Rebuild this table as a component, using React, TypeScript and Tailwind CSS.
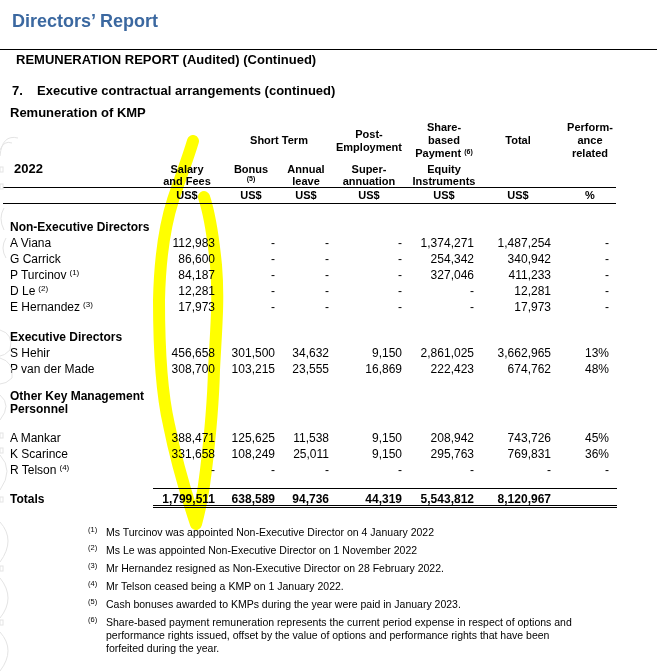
import React from "react";

type Row = { name: string; sup?: string; vals: string[] };

const ned: Row[] = [
  { name: "A Viana", vals: ["112,983", "-", "-", "-", "1,374,271", "1,487,254", "-"] },
  { name: "G Carrick", vals: ["86,600", "-", "-", "-", "254,342", "340,942", "-"] },
  { name: "P Turcinov", sup: "(1)", vals: ["84,187", "-", "-", "-", "327,046", "411,233", "-"] },
  { name: "D Le", sup: "(2)", vals: ["12,281", "-", "-", "-", "-", "12,281", "-"] },
  { name: "E Hernandez", sup: "(3)", vals: ["17,973", "-", "-", "-", "-", "17,973", "-"] },
];

const exec: Row[] = [
  { name: "S Hehir", vals: ["456,658", "301,500", "34,632", "9,150", "2,861,025", "3,662,965", "13%"] },
  { name: "P van der Made", vals: ["308,700", "103,215", "23,555", "16,869", "222,423", "674,762", "48%"] },
];

const kmp: Row[] = [
  { name: "A Mankar", vals: ["388,471", "125,625", "11,538", "9,150", "208,942", "743,726", "45%"] },
  { name: "K Scarince", vals: ["331,658", "108,249", "25,011", "9,150", "295,763", "769,831", "36%"] },
  { name: "R Telson", sup: "(4)", vals: ["-", "-", "-", "-", "-", "-", "-"] },
];

const totals = ["1,799,511", "638,589", "94,736", "44,319", "5,543,812", "8,120,967", ""];

const notes: { n: string; t: React.ReactNode }[] = [
  { n: "(1)", t: "Ms Turcinov was appointed Non-Executive Director on 4 January 2022" },
  { n: "(2)", t: "Ms Le was appointed Non-Executive Director on 1 November 2022" },
  { n: "(3)", t: "Mr Hernandez resigned as Non-Executive Director on 28 February 2022." },
  { n: "(4)", t: "Mr Telson ceased being a KMP on 1 January 2022." },
  { n: "(5)", t: "Cash bonuses awarded to KMPs during the year were paid in January 2023." },
  {
    n: "(6)",
    t: (
      <>
        Share-based payment remuneration represents the current period expense in respect of options and
        <br />
        performance rights issued, offset by the value of options and performance rights that have been
        <br />
        forfeited during the year.
      </>
    ),
  },
];

function DataRow({ r }: { r: Row }) {
  return (
    <div className="grid h-[16px] grid-cols-[153px_62px_60px_54px_73px_72px_77px_58px] leading-[16px] text-[12px]">
      <div className="pl-[10px] whitespace-nowrap">
        {r.name}
        {r.sup && <span className="relative -top-[4px] ml-[3px] text-[8px] leading-none">{r.sup}</span>}
      </div>
      {r.vals.map((v, i) => (
        <div key={i} className="text-right whitespace-nowrap">
          {v}
        </div>
      ))}
    </div>
  );
}

function Decor() {
  return (
    <svg
      className="pointer-events-none absolute left-0 top-0"
      width="30"
      height="671"
      viewBox="0 0 30 671"
      fill="none"
      stroke="#e4e4e4"
      strokeWidth="1"
    >
      <path d="M0 156 Q2 134 18 138" />
      <path d="M0 150 Q4 140 12 143" />
      <rect x="0" y="167" width="3" height="5" />
      <rect x="0" y="184" width="3" height="5" />
      <path d="M4 208 Q-2 218 4 230" />
      <path d="M6 238 Q0 248 6 258" />
      <path d="M0 330 Q14 334 10 350 Q4 356 0 356" />
      <path d="M0 358 Q14 362 12 378 Q6 384 0 384" />
      <path d="M0 395 Q12 405 0 420" />
      <rect x="0" y="433" width="3" height="5" />
      <rect x="0" y="448" width="3" height="5" />
      <path d="M0 455 Q14 470 0 490" />
      <rect x="0" y="497" width="3" height="5" />
      <path d="M0 522 Q16 540 0 562" />
      <rect x="0" y="566" width="3" height="5" />
      <path d="M0 578 Q16 598 0 618" />
      <rect x="0" y="620" width="3" height="5" />
      <path d="M0 632 Q16 650 0 671" />
    </svg>
  );
}

function Highlight() {
  return (
    <svg
      className="pointer-events-none absolute left-0 top-0 mix-blend-multiply"
      width="657"
      height="671"
      viewBox="0 0 657 671"
      fill="none"
    >
      <path
        d="M193 141 C188 158 181 176 173 200 C165 225 160 255 159 300 C159 345 162 395 169 425 C175 455 184 488 196 524 C201 505 204 490 206 470 C209 445 213 410 214 370 C216 330 219 300 216 265 C213 235 209 212 204 197"
        stroke="#ffff00"
        strokeWidth="12"
        strokeLinecap="round"
        strokeLinejoin="round"
      />
    </svg>
  );
}

export default function App() {
  return (
    <div className="relative w-[657px] h-[671px] overflow-hidden bg-white text-black font-['Liberation_Sans',Arial,sans-serif]">
      <div className="pt-[11px] pl-[12px] text-[18px] leading-[20px] font-bold text-[#3b68a0]">
        Directors’ Report
      </div>
      <div className="mt-[18px] h-px w-full bg-black" />
      <div className="mt-[2px] pl-[16px] text-[13px] leading-[16px] font-bold">
        REMUNERATION REPORT (Audited) (Continued)
      </div>
      <div className="mt-[15px] flex pl-[12px] text-[13px] leading-[16px] font-bold">
        <span className="w-[25px]">7.</span>
        <span>Executive contractual arrangements (continued)</span>
      </div>
      <div className="mt-[6px] pl-[10px] text-[13px] leading-[16px] font-bold">Remuneration of KMP</div>

      {/* Header */}
      <div className="grid grid-cols-[155px_64px_64px_46px_80px_70px_78px_66px] gap-y-[3px] text-[11px] font-bold">
        <div />
        <div />
        <div className="col-span-2 self-center pl-[10px] text-center leading-[13px]">Short Term</div>
        <div className="self-center text-center leading-[13px]">
          Post-
          <br />
          Employment
        </div>
        <div className="self-center text-center leading-[13px] whitespace-nowrap">
          Share-
          <br />
          based
          <br />
          Payment <span className="relative -top-[3px] text-[7px] leading-none">(6)</span>
        </div>
        <div className="self-center text-center leading-[13px]">Total</div>
        <div className="self-center text-center leading-[13px]">
          Perform-
          <br />
          ance
          <br />
          related
        </div>

        <div className="pl-[14px] text-[13px] leading-[11px]">2022</div>
        <div className="text-center leading-[12px]">
          Salary
          <br />
          and Fees
        </div>
        <div className="text-center leading-[12px]">
          Bonus
          <div className="text-[7px] leading-[7px]">(5)</div>
        </div>
        <div className="text-center leading-[12px]">
          Annual
          <br />
          leave
        </div>
        <div className="text-center leading-[12px]">
          Super-
          <br />
          annuation
        </div>
        <div className="text-center leading-[12px] whitespace-nowrap">
          Equity
          <br />
          Instruments
        </div>
        <div />
        <div />
      </div>

      <div className="ml-[3px] grid w-[613px] grid-cols-[152px_64px_64px_46px_80px_70px_78px_66px] border-y border-black text-center text-[11px] leading-[15px] font-bold">
        <div />
        <div>US$</div>
        <div>US$</div>
        <div>US$</div>
        <div>US$</div>
        <div>US$</div>
        <div>US$</div>
        <div>%</div>
      </div>

      {/* Body */}
      <div className="mt-[15px] pl-[10px] text-[12px] leading-[16px] font-bold">Non-Executive Directors</div>
      {ned.map((r) => (
        <DataRow key={r.name} r={r} />
      ))}

      <div className="mt-[14px] pl-[10px] text-[12px] leading-[16px] font-bold">Executive Directors</div>
      {exec.map((r) => (
        <DataRow key={r.name} r={r} />
      ))}

      <div className="mt-[13px] pl-[10px] text-[12px] leading-[13px] font-bold">
        Other Key Management
        <br />
        Personnel
      </div>
      <div className="mt-[14px]">
        {kmp.map((r) => (
          <DataRow key={r.name} r={r} />
        ))}
      </div>

      <div className="mt-[10px] flex text-[12px] font-bold">
        <div className="w-[153px] pl-[10px] pt-[5px] leading-[12px]">Totals</div>
        <div className="grid w-[464px] grid-cols-[62px_60px_54px_73px_72px_77px_58px] border-t border-b-[3px] border-double border-black pt-[4px] leading-[12px]">
          {totals.map((v, i) => (
            <div key={i} className="text-right whitespace-nowrap">
              {v}
            </div>
          ))}
        </div>
      </div>

      {/* Footnotes */}
      <div className="mt-[18px] flex flex-col gap-[5px] pl-[88px] text-[10.5px] leading-[13px]">
        {notes.map((n) => (
          <div key={n.n} className="flex">
            <span className="relative -top-[3px] w-[18px] shrink-0 text-[7.5px]">{n.n}</span>
            <span className="whitespace-nowrap">{n.t}</span>
          </div>
        ))}
      </div>

      <Decor />
      <Highlight />
    </div>
  );
}
